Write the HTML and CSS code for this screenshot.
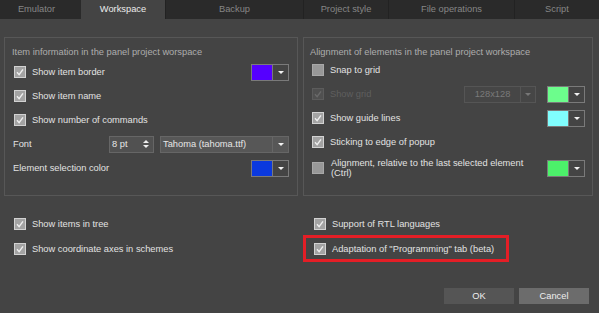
FILE: index.html
```html
<!DOCTYPE html>
<html>
<head>
    <title>Workspace</title>
    <link rel="stylesheet" href="styles.css">
</head>
<body>
    <div class="tabs">
        <div class="tab tab-emulator">Emulator</div>
        <div class="tab tab-workspace tab-active">Workspace</div>
        <div class="tab tab-backup">Backup</div>
        <div class="tab tab-style">Project style</div>
        <div class="tab tab-files">File operations</div>
        <div class="tab tab-script">Script</div>
    </div>
    <div class="page">
        <div class="groups">
            <div class="group group-left">
                <div class="group-title">Item information in the panel project worspace</div>
                <div class="row">
                    <svg class="cb" viewBox="0 0 12 12"><rect x=".5" y=".5" width="11" height="11"/><path d="M3 6.3l2.1 2.3 3.9-5.2"/></svg>
                    <span class="label">Show item border</span>
                    <span class="color-combo"><span class="swatch swatch-purple"></span><span class="drop"></span></span>
                </div>
                <div class="row">
                    <svg class="cb" viewBox="0 0 12 12"><rect x=".5" y=".5" width="11" height="11"/><path d="M3 6.3l2.1 2.3 3.9-5.2"/></svg>
                    <span class="label">Show item name</span>
                </div>
                <div class="row">
                    <svg class="cb" viewBox="0 0 12 12"><rect x=".5" y=".5" width="11" height="11"/><path d="M3 6.3l2.1 2.3 3.9-5.2"/></svg>
                    <span class="label">Show number of commands</span>
                </div>
                <div class="row">
                    <span class="label label-font">Font</span>
                    <span class="spin">
                        <span class="spin-value">8 pt</span>
                        <span class="spin-arrows"><i class="up"></i><i class="down"></i></span>
                    </span>
                    <span class="combo combo-font">
                        <span class="combo-text">Tahoma (tahoma.ttf)</span>
                        <span class="drop"></span>
                    </span>
                </div>
                <div class="row">
                    <span class="label label-plain">Element selection color</span>
                    <span class="color-combo"><span class="swatch swatch-blue"></span><span class="drop"></span></span>
                </div>
            </div>
            <div class="group group-right">
                <div class="group-title">Alignment of elements in the panel project workspace</div>
                <div class="row">
                    <svg class="cb cb-off" viewBox="0 0 12 12"><rect x=".5" y=".5" width="11" height="11"/></svg>
                    <span class="label">Snap to grid</span>
                </div>
                <div class="row">
                    <svg class="cb cb-disabled" viewBox="0 0 12 12"><rect x=".5" y=".5" width="11" height="11"/><path d="M3 6.3l2.1 2.3 3.9-5.2"/></svg>
                    <span class="label label-disabled">Show grid</span>
                    <span class="combo combo-grid">
                        <span class="combo-text">128x128</span>
                        <span class="drop"></span>
                    </span>
                    <span class="color-combo color-combo-gap"><span class="swatch swatch-mint"></span><span class="drop"></span></span>
                </div>
                <div class="row">
                    <svg class="cb" viewBox="0 0 12 12"><rect x=".5" y=".5" width="11" height="11"/><path d="M3 6.3l2.1 2.3 3.9-5.2"/></svg>
                    <span class="label">Show guide lines</span>
                    <span class="color-combo"><span class="swatch swatch-cyan"></span><span class="drop"></span></span>
                </div>
                <div class="row">
                    <svg class="cb" viewBox="0 0 12 12"><rect x=".5" y=".5" width="11" height="11"/><path d="M3 6.3l2.1 2.3 3.9-5.2"/></svg>
                    <span class="label">Sticking to edge of popup</span>
                </div>
                <div class="row row-tall">
                    <svg class="cb cb-off" viewBox="0 0 12 12"><rect x=".5" y=".5" width="11" height="11"/></svg>
                    <span class="label label-wrap">Alignment, relative to the last selected element (Ctrl)</span>
                    <span class="color-combo"><span class="swatch swatch-green"></span><span class="drop"></span></span>
                </div>
            </div>
        </div>

        <div class="bottom">
            <div class="col col-left">
                <div class="row">
                    <svg class="cb" viewBox="0 0 12 12"><rect x=".5" y=".5" width="11" height="11"/><path d="M3 6.3l2.1 2.3 3.9-5.2"/></svg>
                    <span class="label">Show items in tree</span>
                </div>
                <div class="row">
                    <svg class="cb" viewBox="0 0 12 12"><rect x=".5" y=".5" width="11" height="11"/><path d="M3 6.3l2.1 2.3 3.9-5.2"/></svg>
                    <span class="label">Show coordinate axes in schemes</span>
                </div>
            </div>
            <div class="col col-right">
                <div class="row row-rtl">
                    <svg class="cb" viewBox="0 0 12 12"><rect x=".5" y=".5" width="11" height="11"/><path d="M3 6.3l2.1 2.3 3.9-5.2"/></svg>
                    <span class="label">Support of RTL languages</span>
                </div>
                <div class="row highlight">
                    <svg class="cb" viewBox="0 0 12 12"><rect x=".5" y=".5" width="11" height="11"/><path d="M3 6.3l2.1 2.3 3.9-5.2"/></svg>
                    <span class="label">Adaptation of "Programming" tab (beta)</span>
                </div>
            </div>
        </div>

        <div class="actions">
            <div class="btn">OK</div>
            <div class="btn btn-cancel">Cancel</div>
        </div>
    </div>
</body>
</html>
```

FILE: styles.css
```css
*{
    margin: 0;
    padding: 0;
    box-sizing: border-box;
}
body{
    width: 599px;
    height: 313px;
    overflow: hidden;
    background: #444;
    font-family: "Liberation Sans", Arial, sans-serif;
    font-size: 9.3px;
    color: #e2e2e2;
}
.tabs{
    display: flex;
    height: 19px;
    background: #2a2a2a;
}
.tab{
    line-height: 19px;
    text-align: center;
    color: #868686;
    border-left: 1px solid #222;
}
.tab-emulator{ width: 81px; border-left: none; padding-right: 8px; }
.tab-workspace{ width: 84px; }
.tab-backup{ width: 138px; }
.tab-style{ width: 85px; }
.tab-files{ width: 126px; }
.tab-script{ width: 85px; }
.tab-active{
    background: #444;
    color: #ececec;
    border-left: none;
}
.page{
    padding: 18px 6px 0 4px;
}
.groups{
    display: flex;
    gap: 5px;
}
.group{
    height: 159px;
    border: 1px solid #575757;
    padding: 8px 8px 0 9px;
    display: flex;
    flex-direction: column;
    gap: 6px;
}
.group-left{
    width: 294px;
}
.group-right{
    width: 290px;
    padding-left: 8px;
    padding-right: 7px;
}
.group-title{
    height: 12px;
    line-height: 12px;
    margin-left: -2px;
    margin-bottom: -1px;
    color: #adadad;
}
.group-right .group-title{
    margin-bottom: -3px;
}
.row{
    display: flex;
    align-items: center;
    height: 18px;
}
.row-tall{
    height: 22px;
}
.cb{
    width: 12px;
    height: 12px;
    flex: none;
}
.cb rect{
    fill: #a3a3a3;
    stroke: #d2d2d2;
}
.cb path{
    fill: none;
    stroke: #efefef;
    stroke-width: 1.4;
}
.cb-off rect{
    fill: #989898;
    stroke: #a8a8a8;
}
.cb-disabled rect{
    fill: #505050;
    stroke: #5c5c5c;
}
.cb-disabled path{
    stroke: #6a6a6a;
}
.label{
    margin-left: 6px;
    white-space: nowrap;
}
.label-wrap{
    white-space: normal;
    width: 205px;
    line-height: 10px;
    margin-left: 7px;
}
.label-disabled{
    color: #5f5f5f;
}
.label-font{
    width: 96px;
    margin-left: -1px;
}
.label-plain{
    margin-left: -1px;
}
.color-combo{
    margin-left: auto;
    display: flex;
    width: 38px;
    height: 17px;
    border: 1px solid #7a7a7a;
}
.color-combo-gap{
    margin-left: 11px;
}
.swatch{
    width: 20px;
    height: 100%;
}
.swatch-purple{ background: #5500ff; }
.swatch-blue{ background: #0b39de; }
.swatch-mint{ background: #6cfd8c; }
.swatch-cyan{ background: #80fefe; }
.swatch-green{ background: #4cf06a; }
.drop{
    flex: 1;
    height: 100%;
    border-left: 1px solid #7a7a7a;
    display: flex;
    align-items: center;
    justify-content: center;
}
.drop::after{
    content: "";
    border-left: 3px solid transparent;
    border-right: 3px solid transparent;
    border-top: 3px solid #f2f2f2;
}
.spin{
    display: flex;
    width: 45px;
    height: 17px;
    background: #515151;
    border: 1px solid #666;
}
.spin-value{
    flex: 1;
    line-height: 15px;
    padding-left: 2px;
    color: #e6e6e6;
}
.spin-arrows{
    width: 14px;
    display: flex;
    flex-direction: column;
    align-items: center;
    justify-content: center;
    gap: 2px;
}
.spin-arrows i{
    display: block;
    border-left: 3px solid transparent;
    border-right: 3px solid transparent;
}
.spin-arrows .up{
    border-bottom: 3px solid #eee;
}
.spin-arrows .down{
    border-top: 3px solid #eee;
}
.combo{
    display: flex;
    height: 17px;
    background: #575757;
    border: 1px solid #666;
}
.combo-font{
    width: 129px;
    margin-left: 6px;
}
.combo-font .combo-text{
    flex: 1;
    line-height: 15px;
    padding-left: 2px;
    color: #e6e6e6;
}
.combo-font .drop{
    flex: none;
    width: 16px;
    border-left-color: #666;
}
.combo-grid{
    width: 72px;
    margin-left: auto;
    background: #464646;
    border-color: #555;
}
.combo-grid .combo-text{
    width: 55px;
    line-height: 15px;
    text-align: center;
    color: #7a7a7a;
}
.combo-grid .drop{
    border-left-color: #555;
}
.combo-grid .drop::after{
    border-top-color: #777;
}
.bottom{
    display: flex;
    gap: 5px;
    padding-top: 19px;
}
.col{
    display: flex;
    flex-direction: column;
}
.col-left{
    width: 294px;
    padding-left: 10px;
    gap: 7px;
}
.col-right{
    width: 290px;
}
.row-rtl{
    padding-left: 11px;
}
.highlight{
    margin-top: 2px;
    width: 206px;
    height: 27px;
    border: 3px solid #e41e26;
    padding-left: 8px;
}
.actions{
    display: flex;
    justify-content: flex-end;
    gap: 5px;
    margin-top: 26px;
    padding-right: 4px;
}
.btn{
    width: 70px;
    height: 16px;
    line-height: 16px;
    text-align: center;
    background: #555;
    color: #eee;
}
.btn-cancel{
    background: #6c6c6c;
}
```
